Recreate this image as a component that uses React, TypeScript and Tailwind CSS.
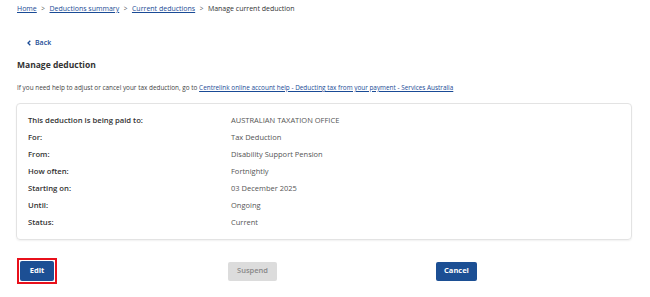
import React from "react";

const rows = [
  { label: "This deduction is being paid to:", value: "AUSTRALIAN TAXATION OFFICE" },
  { label: "For:", value: "Tax Deduction" },
  { label: "From:", value: "Disability Support Pension" },
  { label: "How often:", value: "Fortnightly" },
  { label: "Starting on:", value: "03 December 2025" },
  { label: "Until:", value: "Ongoing" },
  { label: "Status:", value: "Current" },
];

const crumbs = ["Home", "Deductions summary", "Current deductions"];

export default function App() {
  return (
    <div className="w-[650px] h-[297px] bg-white text-[#333] font-['Open_Sans',sans-serif] overflow-hidden">
      <div className="pl-[17px] pt-[3px]">
        {/* breadcrumb */}
        <nav className="flex items-center h-[12px] text-[7px] leading-[12px]">
          {crumbs.map((c) => (
            <React.Fragment key={c}>
              <a className="text-[#1a4b96] underline">{c}</a>
              <span className="mx-[4.5px] text-[#555] text-[6.5px]">&gt;</span>
            </React.Fragment>
          ))}
          <span className="text-[#333]">Manage current deduction</span>
        </nav>

        <a className="mt-[22px] ml-[10px] flex items-center gap-[4px] h-[12px] text-[7px] leading-[12px] font-semibold text-[#1a4b96]">
          <svg width="4" height="6" viewBox="0 0 4 6">
            <path d="M3.3 0.7 L1 3 L3.3 5.3" fill="none" stroke="#1a4b96" strokeWidth="1.3" />
          </svg>
          Back
        </a>

        <h1 className="mt-[9px] h-[14px] text-[8.5px] leading-[14px] font-bold text-[#333]">Manage deduction</h1>

        <p className="mt-[10px] h-[11px] text-[6.4px] leading-[11px] text-[#444] whitespace-nowrap">
          If you need help to adjust or cancel your tax deduction, go to{" "}
          <a className="text-[#1a4b96] underline">
            Centrelink online account help - Deducting tax from your payment - Services Australia
          </a>
        </p>
      </div>

      <div className="mt-[10px] ml-[16px] w-[616px] rounded-[4px] border border-[#e3e3e3] shadow-[0_1px_2px_rgba(0,0,0,0.06)] pt-[8px] pb-[8px] pl-[11px]">
        {rows.map((r) => (
          <div key={r.label} className="grid grid-cols-[203px_1fr] h-[17px] items-center text-[7.7px] leading-[17px]">
            <span className="font-semibold text-[#333]">{r.label}</span>
            <span className="text-[#555] text-[7.5px]">{r.value}</span>
          </div>
        ))}
      </div>

      <div className="mt-[18px] ml-[17px] grid grid-cols-[211px_208px_auto] items-center">
        <div className="w-fit border-2 border-[#e8101b] p-[1px]">
          <button className="block h-[20px] w-[34px] rounded-[2px] bg-[#1c4f94] text-white text-[7.5px] font-bold">
            Edit
          </button>
        </div>
        <div>
          <button className="block h-[19px] w-[49px] rounded-[2px] bg-[#dcdcdc] text-[#888] text-[7.5px] font-semibold">
            Suspend
          </button>
        </div>
        <div>
          <button className="block h-[19px] w-[41px] rounded-[2px] bg-[#1c4f94] text-white text-[7.5px] font-bold">
            Cancel
          </button>
        </div>
      </div>
    </div>
  );
}
